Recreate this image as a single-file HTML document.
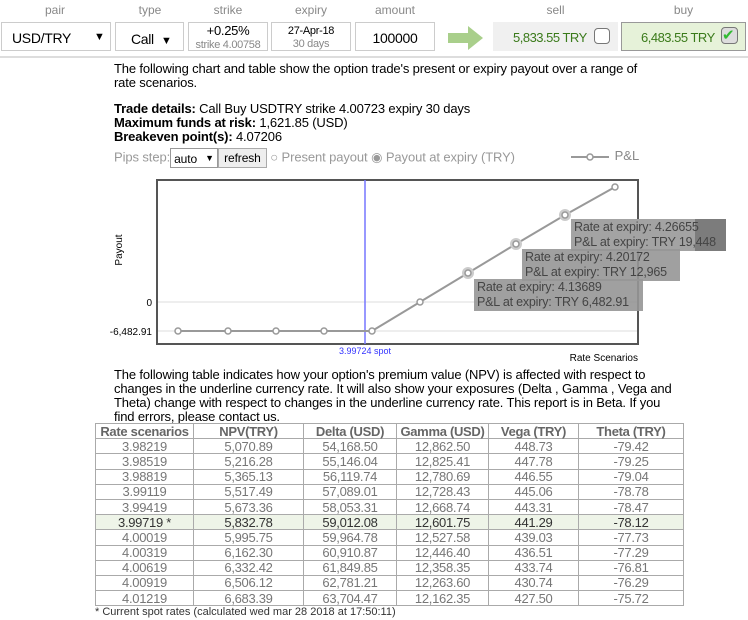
<!DOCTYPE html>
<html><head><meta charset="utf-8"><style>
*{margin:0;padding:0;box-sizing:border-box}
body{width:748px;height:620px;background:#fff;font-family:"Liberation Sans",Arial,sans-serif;position:relative;overflow:hidden;color:#000}
.a{position:absolute}
.lbl{position:absolute;top:3px;font-size:12px;color:#888;text-align:center}
.box{position:absolute;top:22px;height:29px;border:1px solid #ccc;background:#fff;font-size:13px;text-align:center;letter-spacing:-0.3px}
.p{font-size:13px;line-height:14px;letter-spacing:-0.15px;white-space:nowrap}
.tt{position:absolute;background:rgba(150,150,150,.9);color:#444;font-size:12.5px;line-height:15px;padding:1px 3px;white-space:nowrap;letter-spacing:-0.2px}
table{position:absolute;left:95px;top:423px;border-collapse:collapse;font-size:13px;color:#777;letter-spacing:-0.3px}
td,th{border:1px solid #aaa;height:15.2px;line-height:13px;text-align:center;padding:0}
th{color:#666;font-weight:bold}
tr.hl td{background:#eef4e8;color:#333}
</style></head><body>
<div class="lbl" style="left:0;width:110px">pair</div>
<div class="lbl" style="left:115px;width:70px">type</div>
<div class="lbl" style="left:188px;width:80px">strike</div>
<div class="lbl" style="left:271px;width:80px">expiry</div>
<div class="lbl" style="left:355px;width:80px">amount</div>
<div class="lbl" style="left:493px;width:125px">sell</div>
<div class="lbl" style="left:621px;width:125px">buy</div>

<div class="box" style="left:1px;width:110px;text-align:left;padding:7px 0 0 10px;font-size:14px">USD/TRY<span class="a" style="left:92px;top:8px;font-size:11px">▼</span></div>
<div class="box" style="left:115px;width:69px;padding-top:8px;font-size:14px">&nbsp;Call&nbsp;&nbsp;<span style="font-size:11px">▼</span></div>
<div class="box" style="left:188px;width:80px;line-height:13px;padding-top:1px;font-size:13px">+0.25%<br><span style="font-size:11px;color:#888">strike 4.00758</span></div>
<div class="box" style="left:271px;width:80px;line-height:13px;padding-top:2px;font-size:11px">27-Apr-18<br><span style="color:#888">30 days</span></div>
<div class="box" style="left:355px;width:80px;padding-top:7px;font-size:14px">100000</div>
<svg class="a" style="left:448px;top:26px" width="36" height="24"><polygon points="0,7 20,7 20,0 35,12 20,24 20,17 0,17" fill="#a9cf8b"/></svg>
<div class="box" style="left:493px;width:125px;background:#f0f0f0;border-color:#f0f0f0;color:#3a7a1a;padding-top:7px;font-size:13px;text-align:left;padding-left:19px;letter-spacing:-0.5px">5,833.55 TRY<span class="a" style="left:100px;top:5px;width:16px;height:16px;border:1px solid #777;border-radius:4px;background:#fff"></span></div>
<div class="box" style="left:621px;width:125px;background:#e6f2d9;border-color:#999;color:#3a7a1a;padding-top:7px;font-size:13px;text-align:left;padding-left:19px;letter-spacing:-0.5px">6,483.55 TRY<span class="a" style="left:99px;top:4px;width:17px;height:17px;border:1px solid #777;border-radius:4px;background:#ddd;color:#3b3;font-size:15px;line-height:15px">✔</span></div>
<div class="a" style="left:0;top:56px;width:748px;height:2px;background:#ddd"></div>

<div class="a p" style="left:114px;top:62px">The following chart and table show the option trade's present or expiry payout over a range of<br>rate scenarios.</div>
<div class="a p" style="left:114px;top:102px"><b>Trade details:</b> Call Buy USDTRY strike 4.00723 expiry 30 days<br><b>Maximum funds at risk:</b> 1,621.85 (USD)<br><b>Breakeven point(s):</b> 4.07206</div>
<div class="a" style="left:114px;top:148px;font-size:13px;color:#999;white-space:nowrap;letter-spacing:-0.1px">Pips step:<span style="display:inline-block;border:1px solid #999;color:#000;width:48px;height:20px;vertical-align:middle;padding:3px 0 0 3px;font-size:12px;position:relative">auto <span class="a" style="left:34px;top:4px;font-size:9px">▼</span></span><span style="display:inline-block;border:1px solid #aaa;background:#eee;color:#000;height:20px;padding:2px 5px;font-size:12px;vertical-align:middle">refresh</span> ○ Present payout ◉ Payout at expiry (TRY)</div>
<div class="a" style="left:571px;top:148px;font-size:13px;color:#888"><svg width="40" height="12" style="vertical-align:middle"><line x1="0" y1="6" x2="38" y2="6" stroke="#999" stroke-width="2"/><circle cx="19" cy="6" r="3" fill="#fff" stroke="#999" stroke-width="1.5"/></svg> P&amp;L</div>

<svg class="a" style="left:0;top:170px" width="748" height="200">
<rect x="157" y="10" width="481" height="164" fill="#fff" stroke="#555" stroke-width="2"/>
<line x1="158" y1="132" x2="637" y2="132" stroke="#ddd"/>
<line x1="158" y1="161" x2="637" y2="161" stroke="#ddd"/>
<line x1="365" y1="10" x2="365" y2="174" stroke="#77f" stroke-width="1.5"/>
<polyline points="178,161 228,161 276,161 324,161 372,161 420,132 468,103 516,74 565,45 615,17" fill="none" stroke="#999" stroke-width="2"/>
<g fill="#ccc"><circle cx="468" cy="103" r="6"/><circle cx="516" cy="74" r="6"/><circle cx="565" cy="45" r="6"/></g>
<g fill="#fff" stroke="#999" stroke-width="1.5">
<circle cx="178" cy="161" r="3"/><circle cx="228" cy="161" r="3"/><circle cx="276" cy="161" r="3"/><circle cx="324" cy="161" r="3"/><circle cx="372" cy="161" r="3"/><circle cx="420" cy="132" r="3"/><circle cx="468" cy="103" r="3"/><circle cx="516" cy="74" r="3"/><circle cx="565" cy="45" r="3"/><circle cx="615" cy="17" r="3"/></g>
<text x="152" y="136" font-size="10" text-anchor="end" font-family="Liberation Sans">0</text>
<text x="152" y="165" font-size="10" text-anchor="end" font-family="Liberation Sans">-6,482.91</text>
<text x="122" y="80" font-size="10" font-family="Liberation Sans" transform="rotate(-90 122 80)" text-anchor="middle">Payout</text>
<text x="365" y="184" font-size="9" fill="#33f" text-anchor="middle" font-family="Liberation Sans">3.99724 spot</text>
<text x="638" y="191" font-size="10" text-anchor="end" font-family="Liberation Sans">Rate Scenarios</text>
</svg>
<div class="tt" style="left:571px;top:219px;width:155px;background:linear-gradient(90deg,#a3a3a3 0,#a3a3a3 80%,#7c7c7c 80%)">Rate at expiry: 4.26655<br>P&amp;L at expiry: TRY 19,448</div>
<div class="tt" style="left:522px;top:249px;width:158px">Rate at expiry: 4.20172<br>P&amp;L at expiry: TRY 12,965</div>
<div class="tt" style="left:474px;top:279px;width:169px">Rate at expiry: 4.13689<br>P&amp;L at expiry: TRY 6,482.91</div>

<div class="a p" style="left:114px;top:368px">The following table indicates how your option's premium value (NPV) is affected with respect to<br>changes in the underline currency rate. It will also show your exposures (Delta , Gamma , Vega and<br>Theta) change with respect to changes in the underline currency rate. This report is in Beta. If you<br>find errors, please contact us.</div>

<table>
<tr><th style="width:98px">Rate scenarios</th><th style="width:110px">NPV(TRY)</th><th style="width:93px">Delta (USD)</th><th style="width:92px">Gamma (USD)</th><th style="width:90px">Vega (TRY)</th><th style="width:105px">Theta (TRY)</th></tr>
<tr><td>3.98219</td><td>5,070.89</td><td>54,168.50</td><td>12,862.50</td><td>448.73</td><td>-79.42</td></tr>
<tr><td>3.98519</td><td>5,216.28</td><td>55,146.04</td><td>12,825.41</td><td>447.78</td><td>-79.25</td></tr>
<tr><td>3.98819</td><td>5,365.13</td><td>56,119.74</td><td>12,780.69</td><td>446.55</td><td>-79.04</td></tr>
<tr><td>3.99119</td><td>5,517.49</td><td>57,089.01</td><td>12,728.43</td><td>445.06</td><td>-78.78</td></tr>
<tr><td>3.99419</td><td>5,673.36</td><td>58,053.31</td><td>12,668.74</td><td>443.31</td><td>-78.47</td></tr>
<tr class="hl"><td>3.99719 *</td><td>5,832.78</td><td>59,012.08</td><td>12,601.75</td><td>441.29</td><td>-78.12</td></tr>
<tr><td>4.00019</td><td>5,995.75</td><td>59,964.78</td><td>12,527.58</td><td>439.03</td><td>-77.73</td></tr>
<tr><td>4.00319</td><td>6,162.30</td><td>60,910.87</td><td>12,446.40</td><td>436.51</td><td>-77.29</td></tr>
<tr><td>4.00619</td><td>6,332.42</td><td>61,849.85</td><td>12,358.35</td><td>433.74</td><td>-76.81</td></tr>
<tr><td>4.00919</td><td>6,506.12</td><td>62,781.21</td><td>12,263.60</td><td>430.74</td><td>-76.29</td></tr>
<tr><td>4.01219</td><td>6,683.39</td><td>63,704.47</td><td>12,162.35</td><td>427.50</td><td>-75.72</td></tr>
</table>
<div class="a" style="left:95px;top:606px;font-size:11px;color:#333">* Current spot rates (calculated wed mar 28 2018 at 17:50:11)</div>
</body></html>
